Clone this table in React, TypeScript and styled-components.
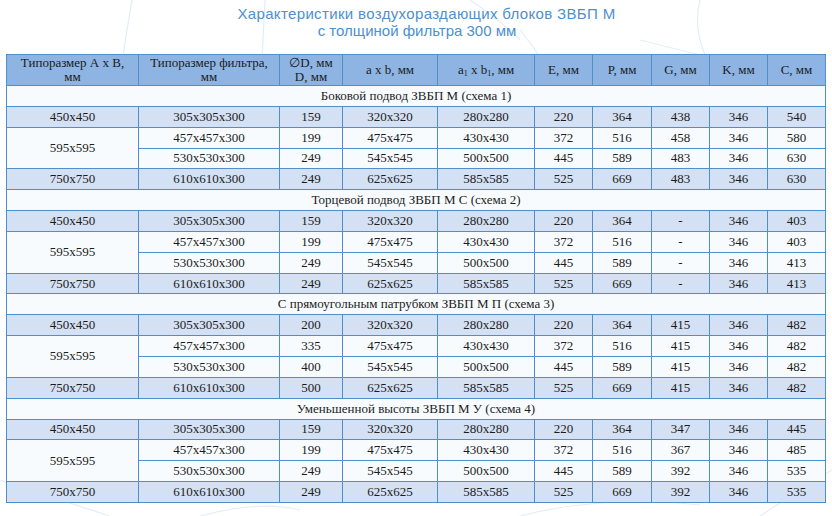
import React from "react";
import styled, { createGlobalStyle } from "styled-components";

const Global = createGlobalStyle`
  html, body { margin: 0; padding: 0; background: #ffffff; }
  #root { width: 832px; height: 516px; overflow: hidden; }
`;

const Page = styled.div`
  position: relative;
  width: 832px;
  height: 516px;
  padding: 5px 0 0 6px;
  box-sizing: border-box;
  background: #ffffff;
  overflow: hidden;
`;

const Decor = styled.svg`
  position: absolute;
  left: 0;
  top: 0;
  width: 832px;
  height: 516px;
  z-index: 0;
  pointer-events: none;
`;

const Content = styled.div`
  position: relative;
  z-index: 1;
`;

const Title = styled.h1`
  margin: 0;
  width: 819px;
  font-family: "Liberation Sans", Arial, sans-serif;
  font-weight: normal;
  font-size: 15px;
  line-height: 17px;
  color: #4d8fcf;
  text-align: center;
`;

const TitleLine = styled.span<{ $shift?: number; $spacing?: number }>`
  display: block;
  margin-left: ${(p) => p.$shift ?? 0}px;
  letter-spacing: ${(p) => p.$spacing ?? 0}px;
`;

const Table = styled.table`
  margin-top: 15px;
  width: 819px;
  border-collapse: collapse;
  table-layout: fixed;
  font-family: "Liberation Serif", "Times New Roman", serif;
  font-size: 13px;
  color: #1b1b1b;
  border: 1px solid #4f8fcc;
`;

const HeadCell = styled.th`
  background: #8db4e3;
  border: 1px solid #4f8fcc;
  font-weight: normal;
  height: 30px;
  padding: 0 2px;
  line-height: 14px;
  text-align: center;
  vertical-align: middle;
  sub { font-size: 8px; vertical-align: -2px; line-height: 0; }
`;

const Row = styled.tr<{ $shade?: boolean }>`
  height: 20.85px;
  background: ${(p) => (p.$shade ? "#d4e1f4" : "#f8fbfe")};
`;

const Cell = styled.td<{ $plain?: boolean }>`
  border: 1px solid #4f8fcc;
  padding: 0;
  text-align: center;
  vertical-align: middle;
  line-height: 14px;
  white-space: nowrap;
  ${(p) => (p.$plain ? "background: #f8fbfe;" : "")}
`;

const SectionCell = styled.td`
  border: 1px solid #4f8fcc;
  padding: 0;
  text-align: center;
  line-height: 14px;
  background: #f8fbfe;
`;

const widths = [132, 141, 63, 95, 97, 58, 59, 58, 58, 58];

type Section = {
  title: string;
  rows: string[][];
};

const sizesA = ["450x450", "595x595", "", "750x750"];
const filters = ["305x305x300", "457x457x300", "530x530x300", "610x610x300"];
const ab = ["320x320", "475x475", "545x545", "625x625"];
const a1b1 = ["280x280", "430x430", "500x500", "585x585"];
const E = ["220", "372", "445", "525"];
const P = ["364", "516", "589", "669"];

const sections: Section[] = [
  {
    title: "Боковой подвод ЗВБП М (схема 1)",
    rows: [
      ["159", "438", "346", "540"],
      ["199", "458", "346", "580"],
      ["249", "483", "346", "630"],
      ["249", "483", "346", "630"],
    ],
  },
  {
    title: "Торцевой подвод ЗВБП М С (схема 2)",
    rows: [
      ["159", "-", "346", "403"],
      ["199", "-", "346", "403"],
      ["249", "-", "346", "413"],
      ["249", "-", "346", "413"],
    ],
  },
  {
    title: "С прямоугольным патрубком ЗВБП М П (схема 3)",
    rows: [
      ["200", "415", "346", "482"],
      ["335", "415", "346", "482"],
      ["400", "415", "346", "482"],
      ["500", "415", "346", "482"],
    ],
  },
  {
    title: "Уменьшенной высоты ЗВБП М У (схема 4)",
    rows: [
      ["159", "347", "346", "445"],
      ["199", "367", "346", "485"],
      ["249", "392", "346", "535"],
      ["249", "392", "346", "535"],
    ],
  },
];

function SectionRows({ s }: { s: Section }) {
  return (
    <>
      <Row>
        <SectionCell colSpan={10}>{s.title}</SectionCell>
      </Row>
      {s.rows.map((r, i) => {
        const shade = i === 0 || i === 3;
        return (
          <Row key={i} $shade={shade}>
            {i === 1 && (
              <Cell rowSpan={2} $plain>
                {sizesA[1]}
              </Cell>
            )}
            {i !== 1 && i !== 2 && <Cell>{sizesA[i]}</Cell>}
            <Cell>{filters[i]}</Cell>
            <Cell>{r[0]}</Cell>
            <Cell>{ab[i]}</Cell>
            <Cell>{a1b1[i]}</Cell>
            <Cell>{E[i]}</Cell>
            <Cell>{P[i]}</Cell>
            <Cell>{r[1]}</Cell>
            <Cell>{r[2]}</Cell>
            <Cell>{r[3]}</Cell>
          </Row>
        );
      })}
    </>
  );
}

export default function App() {
  return (
    <>
      <Global />
      <Page>
        <Decor viewBox="0 0 832 516">
          <g fill="none" stroke="#e4edf7" strokeWidth="1.2">
            <path d="M132 0 Q 118 80 112 150" />
            <path d="M265 0 L 262 60" />
            <path d="M520 30 Q 560 80 580 130" />
            <path d="M470 0 Q 500 20 520 40" />
            <path d="M700 0 Q 690 40 720 80" />
            <path d="M640 40 L 720 60" />
            <path d="M0 480 Q 60 500 110 516" />
            <path d="M200 516 Q 260 500 300 510" />
            <path d="M520 516 Q 600 495 700 505" />
            <path d="M760 516 Q 800 490 832 470" />
          </g>
        </Decor>
        <Content>
          <Title>
            <TitleLine $shift={22} $spacing={0.35}>
              Характеристики воздухораздающих блоков ЗВБП М
            </TitleLine>
            <TitleLine $shift={3}>с толщиной фильтра 300 мм</TitleLine>
          </Title>
          <Table>
            <colgroup>
              {widths.map((w, i) => (
                <col key={i} style={{ width: w }} />
              ))}
            </colgroup>
            <thead>
              <tr>
                <HeadCell>
                  Типоразмер А х В,
                  <br />
                  мм
                </HeadCell>
                <HeadCell>
                  Типоразмер фильтра,
                  <br />
                  мм
                </HeadCell>
                <HeadCell>
                  ∅D, мм
                  <br />
                  D, мм
                </HeadCell>
                <HeadCell>a x b, мм</HeadCell>
                <HeadCell>
                  a<sub>1</sub> x b<sub>1</sub>, мм
                </HeadCell>
                <HeadCell>E, мм</HeadCell>
                <HeadCell>P, мм</HeadCell>
                <HeadCell>G, мм</HeadCell>
                <HeadCell>K, мм</HeadCell>
                <HeadCell>C, мм</HeadCell>
              </tr>
            </thead>
            <tbody>
              {sections.map((s, i) => (
                <SectionRows key={i} s={s} />
              ))}
            </tbody>
          </Table>
        </Content>
      </Page>
    </>
  );
}
